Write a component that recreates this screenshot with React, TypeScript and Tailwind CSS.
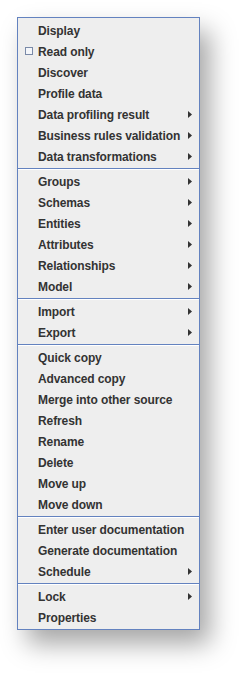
import React from 'react';

type Item = { label: string; sub?: boolean; check?: boolean };

const GROUPS: Item[][] = [
  [
    { label: 'Display' },
    { label: 'Read only', check: true },
    { label: 'Discover' },
    { label: 'Profile data' },
    { label: 'Data profiling result', sub: true },
    { label: 'Business rules validation', sub: true },
    { label: 'Data transformations', sub: true },
  ],
  [
    { label: 'Groups', sub: true },
    { label: 'Schemas', sub: true },
    { label: 'Entities', sub: true },
    { label: 'Attributes', sub: true },
    { label: 'Relationships', sub: true },
    { label: 'Model', sub: true },
  ],
  [
    { label: 'Import', sub: true },
    { label: 'Export', sub: true },
  ],
  [
    { label: 'Quick copy' },
    { label: 'Advanced copy' },
    { label: 'Merge into other source' },
    { label: 'Refresh' },
    { label: 'Rename' },
    { label: 'Delete' },
    { label: 'Move up' },
    { label: 'Move down' },
  ],
  [
    { label: 'Enter user documentation' },
    { label: 'Generate documentation' },
    { label: 'Schedule', sub: true },
  ],
  [
    { label: 'Lock', sub: true },
    { label: 'Properties' },
  ],
];

function Row({ item }: { item: Item }) {
  return (
    <div className="relative flex items-center h-[21px] pl-[20px] pr-[7px]">
      {item.check && (
        <span className="absolute left-[7px] top-[6px] w-[8px] h-[8px] border border-[#7a8aa8] bg-[#f4f6fa]" />
      )}
      <span className="flex-1 text-[12px] font-bold tracking-[-0.1px] text-[#333333] whitespace-nowrap">{item.label}</span>
      {item.sub && (
        <svg width="4" height="7" viewBox="0 0 4 7" className="shrink-0">
          <path d="M0 0 L4 3.5 L0 7 Z" fill="#333333" />
        </svg>
      )}
    </div>
  );
}

export default function App() {
  return (
    <div className="w-[248px] h-[678px] bg-white pt-[17px] pl-[17px] font-['Liberation_Sans',Arial,sans-serif]">
      <div className="w-[183px] border border-[#6382bf] bg-[#eeeeee] pt-[2px] pb-[1px] shadow-[10px_14px_24px_rgba(0,0,0,0.35)]">
        {GROUPS.map((group, gi) => (
          <div key={gi}>
            {gi > 0 && (
              <div className="py-[1px]">
                <div className="h-[1px] bg-[#6382bf]" />
                <div className="h-[1px] bg-white" />
              </div>
            )}
            {group.map((item) => (
              <Row key={item.label} item={item} />
            ))}
          </div>
        ))}
      </div>
    </div>
  );
}
